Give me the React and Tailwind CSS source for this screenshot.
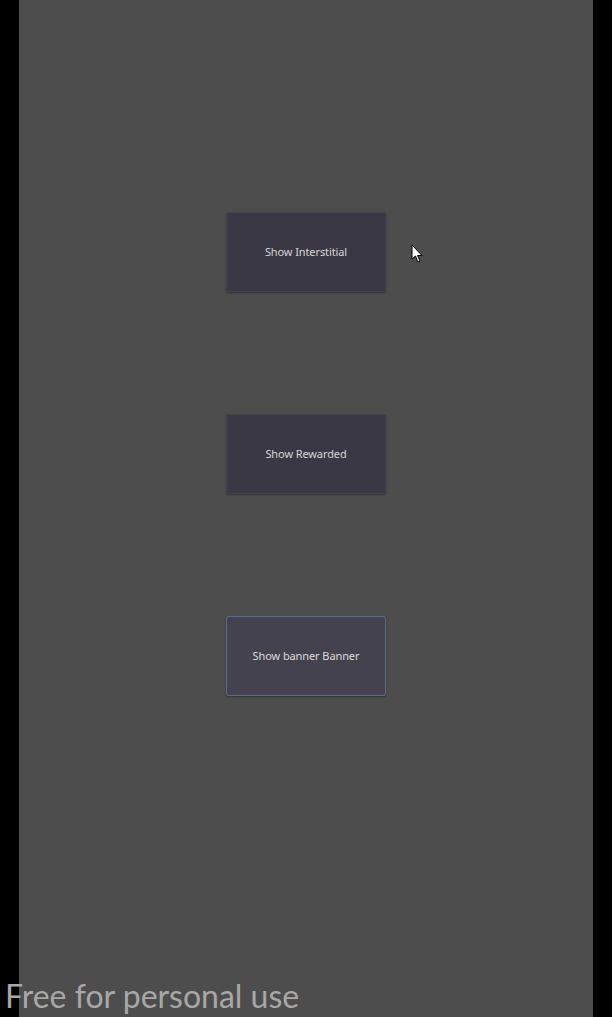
import React from "react"

const buttons = [
  { label: "Show Interstitial", hover: false },
  { label: "Show Rewarded", hover: false },
  { label: "Show banner Banner", hover: true },
]

export default function App() {
  return (
    <div className="relative w-[612px] h-[1017px] bg-black flex justify-center overflow-hidden" style={{ fontFamily: "'Noto Sans', sans-serif" }}>
      {/* game viewport */}
      <div className="w-[574px] h-full bg-[#4d4d4d] flex flex-col items-center pt-[212px] gap-[122px]">
        {buttons.map((b) => (
          <button
            key={b.label}
            className={`w-[160px] h-[80px] rounded-[2px] border text-[11px] tracking-[-0.1px] flex items-center justify-center shadow-[0_1px_2px_rgba(0,0,0,0.35)] ${
              b.hover
                ? "bg-[#45424f] border-[#5a6a8a] text-[#dcdcdc]"
                : "bg-[#3a3844] border-[#44424c] text-[#d6d6d6]"
            }`}
          >
            {b.label}
          </button>
        ))}
      </div>

      {/* mouse cursor */}
      <svg className="absolute left-[411px] top-[244px]" width="13" height="20" viewBox="0 0 13 20">
        <path d="M1 1 L1 15 L4.5 12 L7 18 L9 17 L6.5 11.5 L11 11.5 Z" fill="#fff" stroke="#000" strokeWidth="1" strokeLinejoin="miter" />
      </svg>

      {/* watermark */}
      <div className="absolute left-[5px] top-[976px] text-[32px] leading-[40px] text-[#a8a8a8]" style={{ fontFamily: "Lato, sans-serif" }}>
        Free for personal use
      </div>
    </div>
  )
}
